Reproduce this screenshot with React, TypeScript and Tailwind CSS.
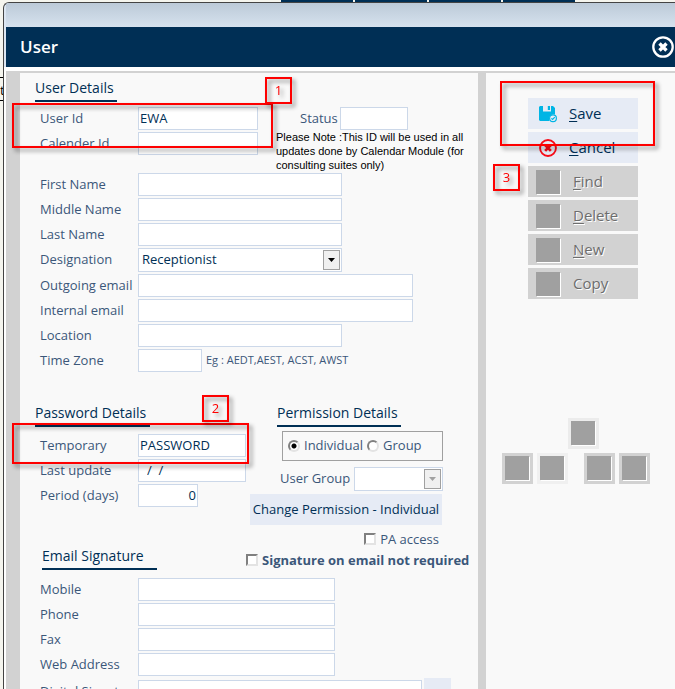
import type { ReactNode } from "react";

const inputStyle = "h-[23px] border border-[#ccd8e9] bg-white px-px pb-0.5 text-[13px] leading-5 text-[#002f55] outline-none";
const tickStyle =
  "appearance-none size-3 shrink-0 bg-white border-2 border-t-[#808080] border-l-[#808080] border-r-[#e3e3e3] border-b-[#e3e3e3]";

interface FieldProps {
  id: string;
  label: string;
  width: string;
  value?: string;
  children?: ReactNode;
}

function Field({ id, label, width, value, children }: FieldProps) {
  return (
    <div className="flex h-[23px] items-center">
      <label htmlFor={id} className="w-[98px] shrink-0 whitespace-nowrap">
        {label}
      </label>
      <input id={id} defaultValue={value} className={`${inputStyle} ${width}`} />
      {children}
    </div>
  );
}

interface DropDownProps {
  id: string;
  width: string;
  option: string;
  disabled?: boolean;
}

function DropDown({ id, width, option, disabled }: DropDownProps) {
  return (
    <div className={`relative h-6 ${width}`}>
      <select
        id={id}
        disabled={disabled}
        className="size-full appearance-none border border-[#ccd8e9] bg-white pl-[3px] text-[13px] text-[#002f55] opacity-100 outline-none"
      >
        <option>{option}</option>
      </select>
      <span className="pointer-events-none absolute top-0.5 right-0.5 flex h-5 w-[17px] items-center justify-center border border-[#a0a0a0] bg-[#f0f0f0]">
        <svg viewBox="0 0 7 4" className={disabled ? "h-1 w-[7px] fill-[#a0a0a0]" : "h-1 w-[7px] fill-black"}>
          <path d="M0 0h7L3.5 4z" />
        </svg>
      </span>
    </div>
  );
}

function SectionTitle({ children, className }: { children: string; className: string }) {
  return (
    <h2 className={`border-b-2 border-[#002f55] text-[14px] leading-6 whitespace-nowrap text-[#002f55] ${className}`}>
      {children}
    </h2>
  );
}

function GreySquare() {
  return <span className="size-6 shrink-0 bg-[#a0a0a0] shadow-[1px_1px_0_#fff]" />;
}

function DisabledAction({ hotkey, rest }: { hotkey?: string; rest: string }) {
  return (
    <button
      disabled
      className="flex h-[31px] w-full items-center gap-[13px] bg-[#d2d2d2] pl-2 text-[15px] text-[#6d6d6d] [text-shadow:1px_1px_0_#fff]"
    >
      <GreySquare />
      <span>
        {hotkey && <u className="underline-offset-2">{hotkey}</u>}
        {rest}
      </span>
    </button>
  );
}

function NavTile({ tone, label }: { tone: string; label: string }) {
  return (
    <button disabled aria-label={label} className={`flex size-[31px] items-start justify-start pt-[3px] pl-[3px] ${tone}`}>
      <GreySquare />
    </button>
  );
}

function Callout({ place, children }: { place: string; children?: string }) {
  return (
    <div
      className={`pointer-events-none absolute z-10 flex items-center justify-center border-2 border-[#fe0000] text-[13px] text-[#fe0000] drop-shadow-[3px_3px_2px_rgba(0,0,0,0.45)] ${place}`}
    >
      {children}
    </div>
  );
}

function SaveIcon() {
  return (
    <svg viewBox="0 0 18 18" className="size-[18px]">
      <path d="M1 1h3v5.500h8V1h2l2 2v6.500a4.600 4.600 0 0 0-5.500 6.500H1L0 15V2z" fill="#00b5e5" />
      <path d="M8.800 1h2.200v4H8.800z" fill="#00b5e5" />
      <circle cx="14" cy="13.200" r="3.400" fill="none" stroke="#00b5e5" strokeWidth="1.200" />
      <path d="M12.400 13.300l1.200 1.200 2.200-2.400" fill="none" stroke="#00b5e5" strokeWidth="1.200" />
    </svg>
  );
}

function CrossIcon({ className }: { className: string }) {
  return (
    <svg viewBox="0 0 22 22" fill="none" stroke="currentColor" className={className}>
      <circle cx="11" cy="11" r="9.700" strokeWidth="2.300" />
      <path d="M7.500 7.500l7 7M14.500 7.500l-7 7" strokeWidth="3.400" />
    </svg>
  );
}

export default function App() {
  return (
    <div className="relative flex h-screen flex-col overflow-hidden bg-[#f5f5ee] pl-[3px] font-['Open_Sans','Noto_Sans',sans-serif] text-[13px] text-[#3b5779]">
      <div className="flex h-0.5 shrink-0 gap-0.5 pr-[100px] pl-[278px]">
        <span className="flex-1 bg-[#002f55]" />
        <span className="flex-1 bg-[#002f55]" />
        <span className="flex-1 bg-[#002f55]" />
        <span className="flex-1 bg-[#002f55]" />
      </div>
      <span className="absolute top-[77px] left-0 h-6 w-[3px] overflow-hidden border-y border-black leading-6 text-black">
        t
      </span>

      <div className="flex min-h-0 flex-1 flex-col overflow-hidden rounded-tl-md border-t border-l border-[#444] bg-[#dce6f1] pl-0.5">
        <div className="h-6 shrink-0 bg-linear-to-b from-[#bccad8] to-[#d6e2ee]" />
        <header className="flex h-10 shrink-0 items-center justify-between bg-[#002f55] pr-px pl-3.5 text-white">
          <h1 className="text-[17px] font-semibold">User</h1>
          <button aria-label="Close">
            <CrossIcon className="size-[22px]" />
          </button>
        </header>

        <div className="mt-1 flex min-h-0 flex-1 border-t-2 border-l-14 border-[#d2d2d2] bg-[#f9f9f9] outline-4 outline-white">
          <main className="min-w-0 flex-1 overflow-hidden pt-[3px] pl-[15px]">
            <section>
              <SectionTitle className="w-[82px]">User Details</SectionTitle>
              <div className="mt-[5px] mb-px flex gap-[18px] pl-[5px]">
                <div className="flex shrink-0 flex-col gap-0.5">
                  <Field id="user-id" label="User Id" width="w-[120px]" value="EWA" />
                  <Field id="calender-id" label="Calender Id" width="w-[120px]" />
                </div>
                <div className="w-[192px]">
                  <div className="flex items-center pl-6">
                    <label htmlFor="status" className="w-10">
                      Status
                    </label>
                    <input id="status" className={`${inputStyle} w-[68px]`} />
                  </div>
                  <p className="font-['Liberation_Sans',sans-serif] text-[11px] leading-3.5 text-black">
                    Please Note :This ID will be used in all updates done by Calendar Module (for consulting suites only)
                  </p>
                </div>
              </div>
              <div className="flex flex-col gap-0.5 pl-[5px]">
                <Field id="first-name" label="First Name" width="w-[204px]" />
                <Field id="middle-name" label="Middle Name" width="w-[204px]" />
                <Field id="last-name" label="Last Name" width="w-[204px]" />
                <div className="flex items-center">
                  <label htmlFor="designation" className="w-[98px]">
                    Designation
                  </label>
                  <DropDown id="designation" width="w-[204px]" option="Receptionist" />
                </div>
                <Field id="outgoing" label="Outgoing email" width="w-[275px]" />
                <Field id="internal" label="Internal email" width="w-[275px]" />
                <Field id="location" label="Location" width="w-[204px]" />
                <Field id="time-zone" label="Time Zone" width="w-16">
                  <span className="pl-1 text-[11px]">Eg : AEDT,AEST, ACST, AWST</span>
                </Field>
              </div>
            </section>

            <div className="mt-[29px] flex">
              <section className="w-[211px] shrink-0">
                <SectionTitle className="w-[115px]">Password Details</SectionTitle>
                <div className="mt-[7px] flex flex-col gap-0.5 pl-[5px]">
                  <Field id="temporary" label="Temporary" width="w-[108px]" value="PASSWORD" />
                  <Field id="last-update" label="Last update" width="w-[108px] pl-2" value="/  /" />
                  <Field id="period" label="Period (days)" width="w-[60px] text-right" value="0" />
                </div>
              </section>

              <section className="w-[197px] shrink-0">
                <SectionTitle className="ml-[31px] w-[124px]">Permission Details</SectionTitle>
                <div className="mt-1 ml-9 flex h-[30px] items-center gap-1 border border-[#a0a0a0] pl-[5px]">
                  <input
                    id="individual"
                    type="radio"
                    name="permission"
                    defaultChecked
                    className={`${tickStyle} rounded-full checked:bg-[radial-gradient(circle,#000_2px,#fff_3px)]`}
                  />
                  <label htmlFor="individual">Individual</label>
                  <input id="group" type="radio" name="permission" className={`${tickStyle} rounded-full`} />
                  <label htmlFor="group">Group</label>
                </div>
                <div className="mt-1.5 flex items-center justify-between pl-[34px]">
                  <label htmlFor="user-group">User Group</label>
                  <DropDown id="user-group" width="w-[89px]" option="" disabled />
                </div>
                <button className="mt-[3px] ml-1 h-[31px] w-[192px] bg-[#e6ebf5] whitespace-nowrap text-[#002f55]">
                  Change Permission - Individual
                </button>
                <label className="mt-1 flex h-5 items-center justify-end gap-1 pr-1 leading-5">
                  <input type="checkbox" className={tickStyle} />
                  PA access
                </label>
              </section>
            </div>

            <section>
              <div className="-mt-[5px] flex items-end pl-[7px]">
                <SectionTitle className="w-[115px]">Email Signature</SectionTitle>
                <label className="ml-[89px] flex items-center gap-1 leading-5 font-bold whitespace-nowrap">
                  <input type="checkbox" className={tickStyle} />
                  Signature on email not required
                </label>
              </div>
              <div className="mt-2 flex flex-col gap-0.5 pl-[5px]">
                <Field id="mobile" label="Mobile" width="w-[197px]" />
                <Field id="phone" label="Phone" width="w-[197px]" />
                <Field id="fax" label="Fax" width="w-[197px]" />
                <Field id="web" label="Web Address" width="w-[197px]" />
                <div className="mt-0.5">
                  <Field id="signature" label="Digital Signature" width="w-[284px] z-1">
                    <button aria-label="Browse" className="ml-0.5 h-[27px] w-[27px] shrink-0 bg-[#e6ebf5]" />
                  </Field>
                </div>
              </div>
            </section>
          </main>

          <aside className="w-[197px] shrink-0 border-l-8 border-[#d2d2d2] pt-[25px]">
            <div className="ml-[42px] flex w-[110px] flex-col gap-[3px]">
              <button className="flex h-[31px] items-center bg-[#e6ebf5] pl-[11px] text-[15px] text-[#002f55]">
                <SaveIcon />
                <span className="pl-3">
                  <u className="underline-offset-2">S</u>ave
                </span>
              </button>
              <button className="flex h-[31px] items-center bg-[#e6ebf5] pl-[11px] text-[15px] text-[#002f55]">
                <CrossIcon className="size-[18px] text-[#f80c18]" />
                <span className="pl-3">
                  <u className="underline-offset-2">C</u>ancel
                </span>
              </button>
              <DisabledAction hotkey="F" rest="ind" />
              <DisabledAction hotkey="D" rest="elete" />
              <DisabledAction hotkey="N" rest="ew" />
              <DisabledAction rest="Copy" />
            </div>

            <div className="mt-[119px] flex flex-col gap-1 pl-4">
              <div className="pl-[66px]">
                <NavTile tone="bg-[#ececec]" label="Up" />
              </div>
              <div className="flex gap-1">
                <NavTile tone="bg-[#d2d2d2]" label="First" />
                <NavTile tone="bg-[#f0f0f0]" label="Previous" />
                <span className="w-2" />
                <NavTile tone="bg-[#d2d2d2]" label="Next" />
                <NavTile tone="bg-[#d2d2d2]" label="Last" />
              </div>
            </div>
          </aside>
        </div>
      </div>

      <Callout place="top-[103px] left-3 h-[45px] w-[261px]" />
      <Callout place="top-[77px] left-[265px] size-[27px]">1</Callout>
      <Callout place="top-[423px] left-3 h-[41px] w-[237px]" />
      <Callout place="top-[395px] left-[202px] size-[27px]">2</Callout>
      <Callout place="top-[81px] right-5 h-[65px] w-[155px]" />
      <Callout place="top-[164px] right-[155px] size-[27px]">3</Callout>
    </div>
  );
}
